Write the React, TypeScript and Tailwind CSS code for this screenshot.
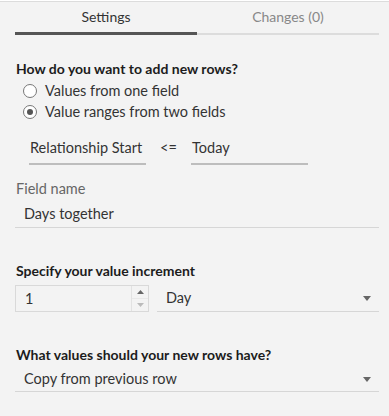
import React from 'react';

const font = { fontFamily: 'Lato, "Open Sans", sans-serif' };

function Radio({ checked, label }: { checked?: boolean; label: string }) {
  return (
    <label className="flex items-center h-[21px] pl-[8px] gap-[8px] text-[14.5px] leading-[18px] text-[#333]">
      <span className="w-[14px] h-[14px] rounded-full border border-[#777] bg-white flex items-center justify-center">
        {checked && <span className="w-[6px] h-[6px] rounded-full bg-[#555]" />}
      </span>
      {label}
    </label>
  );
}

function Caret() {
  return (
    <svg width="8" height="5" viewBox="0 0 8 5" className="shrink-0">
      <path d="M0 0 H8 L4 5 Z" fill="#666" />
    </svg>
  );
}

export default function App() {
  return (
    <div className="w-[389px] h-[416px] bg-[#f3f3f3] border-t border-[#dcdcdc] mt-[1px] pl-[15px] pr-[10px]" style={font}>
      {/* Tabs */}
      <div className="flex h-[33px]">
        <div className="flex-1 flex items-center justify-center text-[14px] text-[#333] border-b-[3px] border-[#555] pb-[2px]">
          Settings
        </div>
        <div className="flex-1 flex items-center justify-center text-[14px] text-[#888] border-b-[2px] border-[#dcdcdc] pb-[3px]">
          Changes (0)
        </div>
      </div>

      {/* How to add */}
      <div className="pt-[25px] text-[14px] font-bold text-[#1c1c1c] leading-[18px] pl-px">
        How do you want to add new rows?
      </div>
      <div className="mt-[2px]">
        <Radio label="Values from one field" />
        <Radio checked label="Value ranges from two fields" />
      </div>

      <div className="flex items-end pl-[14px] mt-[17px] text-[14.5px] leading-[18px] text-[#333]">
        <div className="w-[117px] border-b-2 border-[#bdbdbd] pb-[6px] pl-px">Relationship Start</div>
        <div className="w-[45px] text-center pb-[8px]">&lt;=</div>
        <div className="w-[117px] border-b-2 border-[#bdbdbd] pb-[6px] pl-px">Today</div>
      </div>

      {/* Field name */}
      <div className="mt-[15px] text-[14.5px] text-[#666] leading-[18px] pl-px">Field name</div>
      <div className="mt-[7px] text-[14.5px] text-[#333] border-b border-[#d6d6d6] pb-[4px] pl-[9px] leading-[18px]">
        Days together
      </div>

      {/* Increment */}
      <div className="mt-[34px] text-[14px] font-bold text-[#1c1c1c] leading-[18px] pl-px">
        Specify your value increment
      </div>
      <div className="flex gap-[8px] mt-[5px]">
        <div className="w-[134px] h-[27px] border border-[#d9d9d9] flex">
          <div className="flex-1 flex items-center pl-[9px] text-[14.5px] text-[#333]">1</div>
          <div className="w-[17px] border-l border-[#e2e2e2] flex flex-col">
            <div className="flex-1 flex items-center justify-center">
              <svg width="7" height="4" viewBox="0 0 7 4"><path d="M0 4 L3.5 0 L7 4 Z" fill="#666" /></svg>
            </div>
            <div className="flex-1 flex items-center justify-center border-t border-[#e8e8e8]">
              <svg width="7" height="4" viewBox="0 0 7 4"><path d="M0 0 L7 0 L3.5 4 Z" fill="#bbb" /></svg>
            </div>
          </div>
        </div>
        <div className="flex-1 h-[27px] border-b border-[#d6d6d6] flex items-center justify-between pl-[9px] pr-[8px] text-[14.5px] text-[#333]">
          Day
          <Caret />
        </div>
      </div>

      {/* Values */}
      <div className="mt-[34px] text-[14px] font-bold text-[#1c1c1c] leading-[18px] pl-px">
        What values should your new rows have?
      </div>
      <div className="mt-[6px] pb-[3px] border-b border-[#d6d6d6] flex items-center justify-between pl-[9px] pr-[8px] text-[14.5px] leading-[18px] text-[#333]">
        Copy from previous row
        <Caret />
      </div>
    </div>
  );
}
